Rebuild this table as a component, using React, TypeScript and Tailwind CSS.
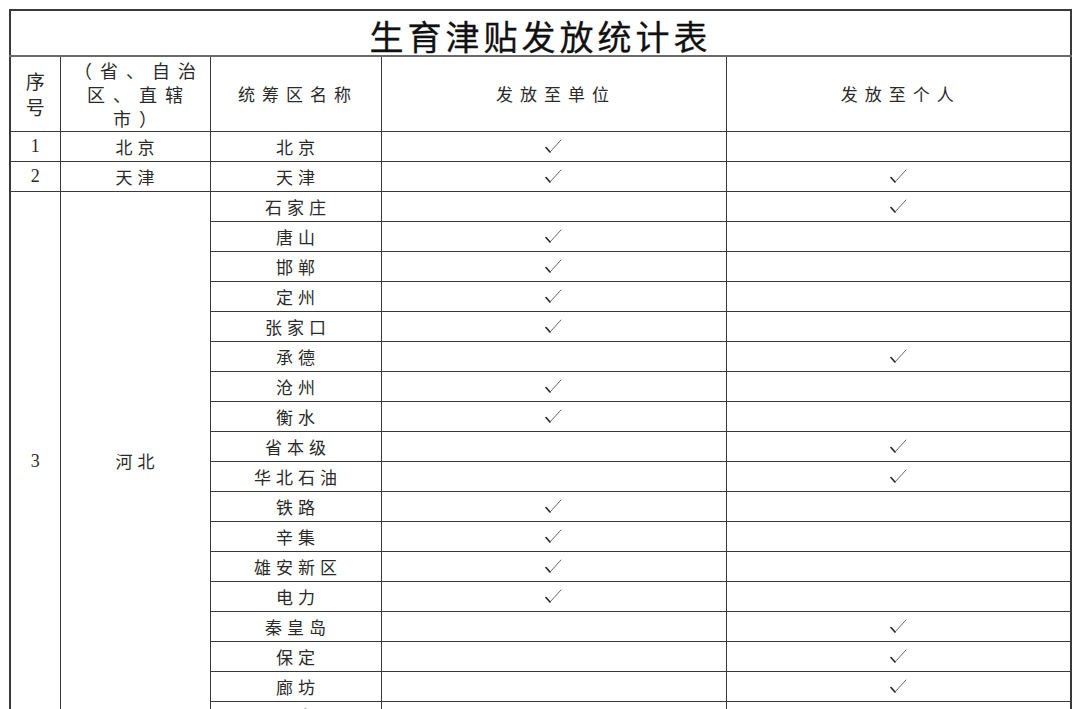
const hebei: [string, boolean, boolean][] = [
  ["石家庄", false, true],
  ["唐山", true, false],
  ["邯郸", true, false],
  ["定州", true, false],
  ["张家口", true, false],
  ["承德", false, true],
  ["沧州", true, false],
  ["衡水", true, false],
  ["省本级", false, true],
  ["华北石油", false, true],
  ["铁路", true, false],
  ["辛集", true, false],
  ["雄安新区", true, false],
  ["电力", true, false],
  ["秦皇岛", false, true],
  ["保定", false, true],
  ["廊坊", false, true],
  ["邢台", true, false],
];

function Check() {
  return (
    <svg width="17" height="14" viewBox="0 0 17 14" className="mx-auto block">
      <path d="M1 8.5 L5 13" stroke="#222" strokeWidth="1.6" fill="none" strokeLinecap="round" />
      <path d="M5 13 L16 1" stroke="#555" strokeWidth="0.9" fill="none" strokeLinecap="round" />
    </svg>
  );
}

const cell = "border border-[#3a3a3a] p-0 text-center align-middle";
const cn = "tracking-[5px] pl-[5px]";
const num = "border border-[#3a3a3a] p-0 text-center align-middle [font-family:'Liberation_Serif',serif] text-[18px]";

export default function App() {
  return (
    <div className="w-[1080px] h-[709px] overflow-hidden bg-white text-[#2a2a2a] [font-family:'Noto_Sans_CJK_SC','Liberation_Serif',serif]">
      <table className="ml-[9px] mt-[9px] w-[1061px] table-fixed border-collapse border-2 border-[#3a3a3a] text-[17px] leading-none">
        <colgroup>
          <col className="w-[50px]" />
          <col className="w-[150px]" />
          <col className="w-[171px]" />
          <col className="w-[345px]" />
          <col className="w-[345px]" />
        </colgroup>
        <tbody>
          <tr className="h-[46px]">
            <td colSpan={5} className="border-x-2 border-t-2 border-b-2 border-x-[#3a3a3a] border-t-[#3a3a3a] border-b-[#6a6a6a] p-0 text-center align-middle">
              <span className="text-[34px] font-normal [-webkit-text-stroke:0.3px_#111] tracking-[4px] text-[#111] relative top-[3px]">生育津贴发放统计表</span>
            </td>
          </tr>
          <tr className="h-[75px]">
            <td className={cell}>
              <div className="leading-[26px] text-[19px]">序<br />号</div>
            </td>
            <td className={cell}>
              <div className="leading-[24px] tracking-[8px] pl-[8px] text-[18px]">
                （省、自治<br />区、直辖<br />市）
              </div>
            </td>
            <td className={cell}><span className={`${cn} tracking-[7px]`}>统筹区名称</span></td>
            <td className={cell}><span className={`${cn} tracking-[7px]`}>发放至单位</span></td>
            <td className={cell}><span className={`${cn} tracking-[7px]`}>发放至个人</span></td>
          </tr>
          <tr className="h-[30px]">
            <td className={num}>1</td>
            <td className={cell}><span className={cn}>北京</span></td>
            <td className={cell}><span className={cn}>北京</span></td>
            <td className={cell}><Check /></td>
            <td className={cell}></td>
          </tr>
          <tr className="h-[30px]">
            <td className={num}>2</td>
            <td className={cell}><span className={cn}>天津</span></td>
            <td className={cell}><span className={cn}>天津</span></td>
            <td className={cell}><Check /></td>
            <td className={cell}><Check /></td>
          </tr>
          {hebei.map(([name, unit, person], i) => (
            <tr key={name} className="h-[30px]">
              {i === 0 && (
                <>
                  <td rowSpan={hebei.length} className={num}>3</td>
                  <td rowSpan={hebei.length} className={cell}><span className={cn}>河北</span></td>
                </>
              )}
              <td className={cell}><span className={cn}>{name}</span></td>
              <td className={cell}>{unit && <Check />}</td>
              <td className={cell}>{person && <Check />}</td>
            </tr>
          ))}
        </tbody>
      </table>
    </div>
  );
}
